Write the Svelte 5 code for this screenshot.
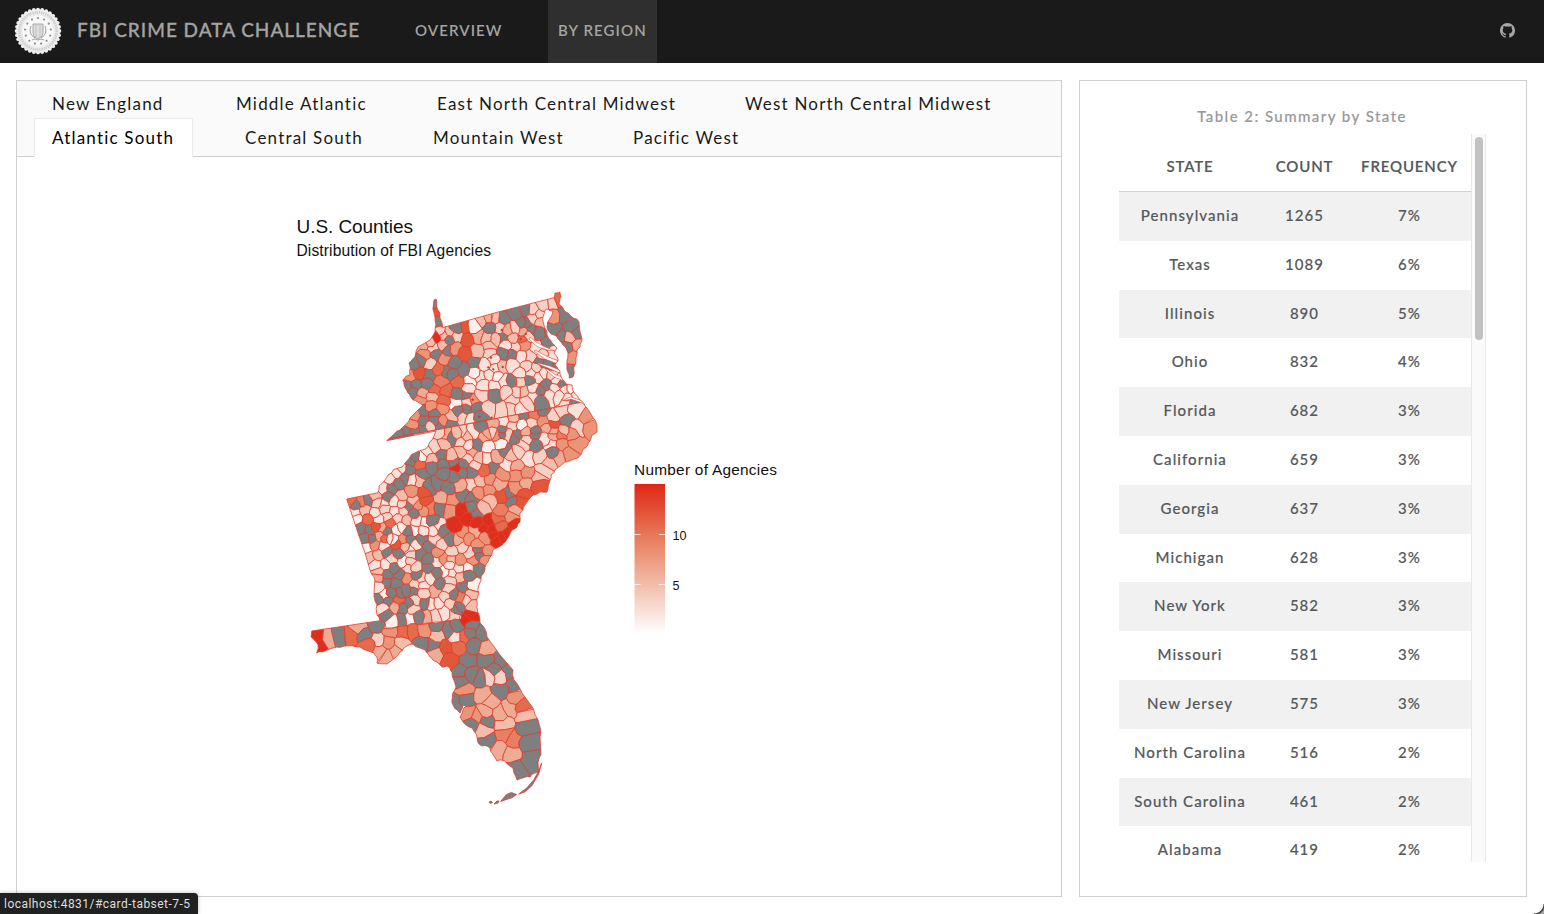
<script>
  const shades = ['#fdf0ec', '#fae2da', '#f6d2c6', '#f2bdab', '#eeac95', '#ea9578', '#e77f60', '#e46b4b', '#e2573a', '#df2f1c'];

  // County centres, one sheet per area: "x y shade", three sheet units to a pixel.
  const sheets = [
    {
      x: 380, y: 285, data: `167 62 g,172 80 8,175 115 g,180 140 2,210 140 3,230 130 g,255 125 8,282 125 0,305 105 3,325 98 4,168 157 9,190 152 3,208 165 g,230 155 2,262 165 8,295 155 4,150 170 3,190 180 3,160 190 2,128 185 4,205 195 g,225 190 5,255 205 8,290 200 3,135 210 5,103 235 g,125 225 g,150 235 2,168 207 g,195 222 5,222 235 g,285 235 g,250 255 g,175 250 7,200 260 g,117 265 8,145 270 g,90 275 5,82 300 g,108 300 g,138 298 g,185 290 6,235 293 7,215 265 g,100 320 g,127 325 4,165 320 7,200 318 7,230 325 g,260 330 g,120 345 5,158 337 3,155 365 5,190 348 7,130 378 g,165 385 g,105 395 5,185 370 5,60 450 g,85 443 g,100 420 5,103 437 g,130 432 g,130 408 g,165 407 g,150 425 2,190 410 5,215 395 3,180 425 g,210 418 g,235 380 g,225 355 0,260 375 g,265 350 2,250 395 2,290 368 g,280 345 5,270 400 1,300 395 g,305 425 g,
270 290 0,265 310 1,283 265 0,300 275 1,315 240 1,330 205 2,345 165 3,322 160 3,370 160 g,330 125 g,360 125 2,370 105 g,345 100 3,330 182 3,385 135 4,410 85 g,435 75 g,460 75 2,490 60 2,515 55 2,532 45 7,400 160 3,425 115 g,440 115 g,405 130 2,430 140 4,425 163 7,445 150 2,455 135 g,470 140 g,460 100 2,480 110 3,480 90 2,430 180 5,405 185 2,378 180 1,395 210 g,370 205 g,340 225 1,365 245 3,345 250 1,330 270 1,310 300 1,305 330 2,345 300 1,370 290 1,350 275 0,345 330 g,380 320 2,400 345 2,400 290 g,420 290 2,450 285 g,420 265 1,400 240 1,425 215 1,450 215 2,440 245 2,470 250 2,455 265 1,480 235 g,505 235 g,520 247 g,470 190 1,500 185 g,515 205 1,490 205 2,490 265 1,515 270 2,475 275 1,530 285 1,545 295 g,500 300 g,480 318 g,460 310 1,430 320 3,410 320 2,440 350 2,480 345 g,460 335 1,510 330 1,525 310 1,540 330 1,555 315 1,325 370 2,365 375 2,395 370 2,420 370 1,575 310 0,590 330 1,560 340 1,580 355 g,560 350 1,
520 95 5,550 90 g,520 130 g,540 155 g,575 125 g,590 145 g,570 160 3,565 185 g,590 180 4,575 215 5,572 260 g,340 415 4,370 408 1,400 400 3,430 392 g,460 390 6,490 375 g,520 395 2,545 380 2,620 395 5,590 375 1,520 418 8,560 408 g,590 430 2,635 425 5,550 440 3,520 440 4,490 410 5,500 430 4,455 415 2,425 420 0,400 420 2,365 440 g,340 445 2,315 455 4,280 442 1,245 445 2,195 450 4,410 450 g,440 440 4,465 440 g`
    },
    {
      x: 335, y: 430, data: `315 10 2,350 25 g,325 40 3,380 35 2,370 12 3,400 45 1,395 20 3,425 45 g,455 15 4,460 50 0,495 40 0,500 12 g,485 15 5,520 15 2,540 20 g,575 30 2,600 12 g,600 45 g,565 45 2,630 25 1,655 15 4,680 12 6,710 12 5,720 40 5,700 70 5,650 45 1,680 45 5,300 50 2,275 65 1,260 80 0,320 78 g,350 80 3,380 65 3,410 70 4,430 85 3,455 85 1,485 80 4,510 60 g,530 75 3,580 85 1,615 80 2,655 65 g,675 80 4,550 65 2,
240 80 g,225 95 g,255 103 7,220 120 g,290 90 3,290 110 g,325 105 g,262 130 g,365 112 9,355 95 g,385 105 g,400 85 2,410 125 g,420 105 2,450 120 7,475 115 g,515 105 1,545 110 4,575 130 5,545 135 5,500 130 5,625 120 2,640 100 3,610 145 3,355 140 g,380 125 g,325 130 g,200 115 1,185 130 1,165 145 1,210 145 g,190 160 g,230 150 1,145 175 1,170 175 g,250 150 3,285 170 g,310 160 g,340 175 g,375 168 4,410 165 2,435 155 3,465 150 5,490 160 4,430 185 5,460 180 5,385 195 g,410 205 g,500 200 8,522 190 g,545 175 5,575 160 4,610 165 8,565 195 8,555 215 8,530 215 g,
320 205 4,350 210 5,315 235 g,345 240 5,265 190 8,270 215 8,285 235 6,230 185 5,380 240 9,360 285 9,400 265 9,410 232 g,426 250 g,445 235 3,465 215 3,500 240 6,490 268 7,425 277 9,445 290 9,460 275 9,470 300 9,497 290 7,530 260 5,540 240 4,540 290 9,515 310 9,485 330 9,500 320 9,475 315 9,420 305 4,450 325 5,385 310 5,400 325 5,430 345 5,370 330 4,
50 215 7,62 225 g,80 215 6,100 213 g,125 218 2,120 200 3,160 200 g,145 225 1,180 215 1,200 200 3,200 220 2,220 230 g,235 212 3,65 265 0,60 245 1,100 268 7,90 240 3,120 250 1,150 240 2,130 268 1,155 260 2,180 245 1,205 245 2,235 250 g,265 240 5,250 225 5,78 295 g,105 300 g,125 290 8,140 295 4,165 280 7,190 265 2,185 300 0,155 305 g,215 270 3,200 293 0,245 275 1,270 280 0,240 300 0,265 300 1,290 275 g,220 305 g,295 300 1,310 290 1,325 305 g,345 330 g,90 325 g,110 325 g,135 320 4,165 325 1,150 325 7,120 345 5,145 350 1,95 355 0,187 342 8,175 327 0,205 330 5,225 330 g,240 345 1,262 328 g,210 350 3,225 360 1,285 350 g,300 330 2,320 345 2,310 368 5,325 385 5,350 365 2,350 390 3,380 350 2,375 390 5,405 370 2,430 360 g,415 390 5,433 377 g,455 365 5,450 390 5,430 415 g,
105 380 3,130 375 3,155 367 g,170 385 2,190 370 g,205 395 0,230 375 2,225 395 2,255 375 g,280 390 g,280 412 g,305 395 1,305 430 g,125 405 1,150 405 1,175 415 g,220 415 2,240 412 2,245 435 g,195 435 g,215 445 5,130 425 3,130 445 4,155 435 g,155 455 g,185 460 g,260 445 2,285 445 1,315 460 g,330 425 0,350 430 1,345 405 1,370 415 1,400 415 0,400 435 g,375 440 3,415 465 0,385 470 g,345 450 2,340 475 2,300 485 4,265 465 1,240 465 2,130 470 1,150 495 0,170 490 g,195 490 g,235 485 g,215 480 g,265 490 2,355 495 g,375 503 6,410 495 3,395 512 2,330 502 2,345 520 2,370 530 g,310 520 1,270 518 g,240 512 2,225 522 g,190 510 7,160 515 g,130 510 g,180 530 4,200 535 g,410 525 3,145 535 1,290 522 1`
    },
    {
      x: 300, y: 590, data: `260 72 g,280 95 0,305 92 g,330 87 0,355 80 g,380 80 4,405 75 2,430 65 1,460 78 2,470 55 g,512 77 9,500 92 9,340 55 2,50 145 9,60 165 9,85 145 4,118 138 g,153 135 7,180 112 4,195 135 g,230 105 g,205 165 7,235 150 2,240 185 4,265 155 5,270 125 5,260 200 4,290 185 4,305 160 3,310 128 7,340 125 7,372 120 5,365 160 g,400 165 g,412 135 3,410 108 g,445 120 g,410 190 4,438 175 8,450 210 8,475 170 7,470 140 1,490 140 7,472 110 g,515 108 g,510 130 g,545 130 g,520 165 g,562 175 4,505 210 g,560 208 g,600 210 g,480 248 g,515 255 g,540 265 g,485 275 g,565 260 2,600 262 2,580 240 g,625 250 g,640 285 g,600 300 g,495 298 5,500 328 g,470 340 g,550 315 4,570 335 4,650 323 5,668 350 7,630 355 4,675 375 3,505 370 5,530 380 5,555 365 4,560 392 g,600 370 4,610 400 3,515 400 g,550 418 3,615 435 6,640 450 6,560 450 g,600 480 4,635 490 4,680 415 g,685 460 g,690 510 g,645 535 g`
    }
  ];

  // Signed distance below the Virginia–Carolina line and the Georgia–Florida line.
  const lineVA = (x, y) => y - (430 - (x - 436) * 0.19);
  const lineFL = (x, y) => y - (628 - (x - 387) * 0.112);

  const seeds = sheets.flatMap((s) =>
    s.data.split(',').map((t) => {
      const [a, b, c] = t.trim().split(' ');
      const x = s.x + a / 3;
      const y = s.y + b / 3;
      return { x, y, va: lineVA(x, y) > 0, fl: lineFL(x, y) > 0, fill: c === 'g' ? '#7f7f7f' : shades[+c] };
    })
  );

  const noise = (x, y, k) => {
    const v = Math.sin(Math.round(x * 20) * 12.9898 + Math.round(y * 20) * 78.233 + k * 37.7) * 43758.5453;
    return v - Math.floor(v) - 0.5;
  };

  function roughen(pts, amount, min, max) {
    const out = [];
    pts.forEach((p, i) => {
      const q = pts[(i + 1) % pts.length];
      out.push(p);
      const len = Math.hypot(q[0] - p[0], q[1] - p[1]);
      const mx = (p[0] + q[0]) / 2;
      const my = (p[1] + q[1]) / 2;
      if (len > min && len < max && Math.abs(lineVA(mx, my)) > 0.1) {
        const a = Math.min(len, 12) * amount;
        out.push([mx + noise(mx, my, 1) * a, my + noise(mx, my, 2) * a]);
      }
    });
    return out;
  }

  function clip(poly, side) {
    const next = [];
    poly.forEach((p, i) => {
      const q = poly[(i + 1) % poly.length];
      const a = side(p), b = side(q);
      if (a <= 0) next.push(p);
      if ((a < 0) !== (b < 0)) {
        const t = a / (a - b);
        next.push([p[0] + (q[0] - p[0]) * t, p[1] + (q[1] - p[1]) * t]);
      }
    });
    return next;
  }

  function cell(s) {
    const r = 32;
    let poly = [[s.x - r, s.y - r], [s.x + r, s.y - r], [s.x + r, s.y + r], [s.x - r, s.y + r]];
    for (const o of seeds) {
      if (o === s || Math.abs(o.x - s.x) > 66 || Math.abs(o.y - s.y) > 66 || o.va !== s.va) continue;
      if (o.fl !== s.fl && o.x < 458 && s.x < 458 && o.x > 378 && s.x > 378) continue;
      const dx = o.x - s.x, dy = o.y - s.y;
      if (dx === 0 && dy === 0) continue;
      const mx = (o.x + s.x) / 2, my = (o.y + s.y) / 2;
      poly = clip(poly, (p) => (p[0] - mx) * dx + (p[1] - my) * dy);
    }
    const va = s.va ? -1 : 1;
    poly = clip(poly, (p) => va * lineVA(p[0], p[1]));
    if (s.x > 378 && s.x < 458) {
      const fl = s.fl ? -1 : 1;
      if (!s.fl || s.x > 387) poly = clip(poly, (p) => fl * lineFL(p[0], p[1]));
    }
    return poly;
  }

  const toPath = (pts) => 'M' + pts.map((p) => p[0].toFixed(1) + ' ' + p[1].toFixed(1)).join('L') + 'Z';
  const counties = seeds.map((s) => ({ fill: s.fill, d: toPath(roughen(cell(s), 0.4, 3, 60)) }));

  const coast = `434 300,436 299,438 310,440 318,442.3 327.7,498 312,554 297.7,555 293,560 292,561 297,559 303,563 308,568 313,573 318,579 322,581 335,580 347,577 350,575 365,573 377,569 378,567 370,568 353,563 345,560 341,551 334,547 327,550 318,553 311,546 309,543 317,544 325,547 335,552 343,557 348,554 353,558 361,555 365,560 371,563 380,566 384,572 385,580 400,587 408,595 420,597 432,592 435,590 441,583 449,578 458,565 462,555 470,550 480,547 492,541 491.7,533 495,525 505,520 513,520 522,517 527,512 530,508 538,502 545,494 549,490 557,485 567,481 577,478 588,476.7 600,477.7 612,480 623,487 637,500 655,513 670,514 680,522 693,533 708,538 720,540 737,541 755,538 762,539 772,530 777,517 780,513 768,505 761,497 761,490 748,482 746,477 737,472 728,460 717,466 706,463 705,460 713,454 707,452.7 697,456 687,452 672,447 666,442 667,437 662,430 657,425 650,413 644,407 646,400 652,395 658,387 664,377 663,374 653,360 647,345 646,333 648,325 651,316.7 653,318 645,311 637,311.7 631,380 620.7,377 615,377 605,374 597,375 580,370 570,365 553,358 533,346.7 499,378 492.7,379 486,385 480,388 475,402 467,410 457,415 453,422 450,432 440,436 431,386.7 440.7,400 430,410 418,423 405,413 400,408 393,402.7 380,410 375,409 363,415 357,418 347,430 340,435 332,435 317`
    .split(',').map((t) => t.trim().split(' ').map(Number));
  const outline = toPath(roughen(roughen(coast, 0.28, 6, 17.5), 0.25, 4, 9));

  const towns = [[365, 135], [325, 247], [340, 253], [368, 246], [333, 218], [278, 344], [335, 398], [298, 395], [422, 162], [437, 147]]
    .map(([x, y]) => [380 + x / 3, 285 + y / 3]);

  const stars = Array.from({ length: 13 }, (_, i) => {
    const a = (i / 13) * Math.PI * 2;
    return [24 + Math.sin(a) * 13, 24 - Math.cos(a) * 13];
  });
  const scallops = Array.from({ length: 32 }, (_, i) => {
    const a = (i / 32) * Math.PI * 2;
    return [24 + Math.sin(a) * 21.4, 24 - Math.cos(a) * 21.4];
  });

  const tabRows = [
    [['New England', 114], ['Middle Atlantic', 131], ['East North Central Midwest', 238], ['West North Central Midwest', 246]],
    [['Atlantic South', 123], ['Central South', 118], ['Mountain West', 130], ['Pacific West', 106]]
  ];
  const rows = [
    ['Pennsylvania', 1265, 7], ['Texas', 1089, 6], ['Illinois', 890, 5], ['Ohio', 832, 4], ['Florida', 682, 3],
    ['California', 659, 3], ['Georgia', 637, 3], ['Michigan', 628, 3], ['New York', 582, 3], ['Missouri', 581, 3],
    ['New Jersey', 575, 3], ['North Carolina', 516, 2], ['South Carolina', 461, 2], ['Alabama', 419, 2]
  ];
</script>

<div class="page">
  <header>
    <svg class="seal" width="48" height="48" viewBox="0 0 48 48">
      {#each scallops as [x, y]}<circle cx={x} cy={y} r="1.9" fill="#f0f0f0" />{/each}
      <circle cx="24" cy="24" r="21.8" fill="#eeeeee" />
      <circle cx="24" cy="24" r="18.6" fill="none" stroke="#cbcbcb" stroke-width="2.6" stroke-dasharray="1.3 .9" />
      <circle cx="24" cy="24" r="16.2" fill="#f8f8f8" stroke="#dedede" stroke-width=".5" />
      {#each stars as [x, y]}<circle cx={x} cy={y} r="1.05" fill="#858585" />{/each}
      <path d="M19 17h10v9q0 4-5 6q-5-2-5-6z" fill="#dedede" stroke="#999" stroke-width=".8" />
      <path d="M22 17v13M26 17v13" stroke="#c0c0c0" stroke-width=".9" />
      <path d="M17 19q-3 8 4 12M31 19q3 8-4 12M18 33l3-1 3 1 3-1 3 1" fill="none" stroke="#999" stroke-width=".9" />
    </svg>
    <div class="brand">FBI CRIME DATA CHALLENGE</div>
    <nav>
      <span class="link overview">OVERVIEW</span>
      <span class="link current">BY REGION</span>
    </nav>
    <svg class="github" width="15" height="15" viewBox="0 0 16 16">
      <path fill="#a6a6a6" d="M8 0C3.58 0 0 3.58 0 8c0 3.54 2.29 6.53 5.47 7.59.4.07.55-.17.55-.38 0-.19-.01-.82-.01-1.49-2.01.37-2.53-.49-2.69-.94-.09-.23-.48-.94-.82-1.13-.28-.15-.68-.52-.01-.53.63-.01 1.08.58 1.23.82.72 1.21 1.87.87 2.33.66.07-.52.28-.87.51-1.07-1.78-.2-3.64-.89-3.64-3.95 0-.87.31-1.59.82-2.15-.08-.2-.36-1.02.08-2.12 0 0 .67-.21 2.2.82.64-.18 1.32-.27 2-.27s1.36.09 2 .27c1.53-1.04 2.2-.82 2.2-.82.44 1.1.16 1.92.08 2.12.51.56.82 1.27.82 2.15 0 3.07-1.87 3.75-3.65 3.95.29.25.54.73.54 1.48 0 1.07-.01 1.93-.01 2.2 0 .21.15.46.55.38A8.01 8.01 0 0 0 16 8c0-4.42-3.58-8-8-8" />
    </svg>
  </header>

  <main>
    <section class="card map-card">
      <div class="tabs">
        {#each tabRows as row}
          <div class="tab-row">
            {#each row as [name, width]}
              <div class="tab" class:active={name === 'Atlantic South'}><span style="width:{width}px">{name}</span></div>
            {/each}
          </div>
        {/each}
      </div>
      <svg class="plot" width="1044" height="739" viewBox="17 157 1044 739">
        <defs>
          <clipPath id="land"><path d={outline} /></clipPath>
          <linearGradient id="ramp" x1="0" y1="0" x2="0" y2="1">
            <stop offset="0" stop-color="#df2817" />
            <stop offset=".17" stop-color="#e34f35" />
            <stop offset=".34" stop-color="#e77858" />
            <stop offset=".5" stop-color="#ec9a7f" />
            <stop offset=".67" stop-color="#f2bda9" />
            <stop offset=".84" stop-color="#f8ded5" />
            <stop offset="1" stop-color="#fff" />
          </linearGradient>
        </defs>
        <text x="296.5" y="233" font-size="19" textLength="116.5">U.S. Counties</text>
        <text x="296.5" y="256" font-size="15.6" textLength="194.5">Distribution of FBI Agencies</text>
        <g clip-path="url(#land)" stroke="#e23a2c" stroke-width=".8" stroke-linejoin="round">
          {#each counties as c}<path d={c.d} fill={c.fill} />{/each}
          <path d="M547 350l-9-3-5-4-4-4 1-2 6 5 7 4 12 5zM558 364l-13-5-11-8 1-1 11 6 15 6zM562 374l-14-6-10-4 0-1 12 3 14 6zM564 381l-10-4-8-7 1-1 9 6 12 4zM590 408l-8-5-11-4-6 1 0-1 6-2 12 4 8 5z" fill="#fff" stroke-width=".5" />
        </g>
        <path d={outline} fill="none" stroke="#df4033" stroke-width=".8" />
        {#each towns as [x, y]}<circle cx={x} cy={y} r=".9" fill="#9c4a43" stroke="#d0382d" stroke-width=".6" />{/each}
        <g fill="#7f7f7f" stroke="#d93a2e" stroke-width=".8" stroke-linejoin="round">
          <path d="M541.7 763l-3 11-7 12-7 6-6 2 8-6 7-8 5-9z" />
          <path d="M500.5 801.500l6-7 5-2 5 2-4 3-6 2z" />
          <path d="M489 802l2-1 1.500 1.500-2 1zM494 804l3-3 2 0-1 2z" />
        </g>
        <text x="634" y="474.500" font-size="15.4" textLength="143">Number of Agencies</text>
        <rect x="634.500" y="484" width="30.500" height="150" fill="url(#ramp)" />
        <path d="M634.500 534.500h6M659 534.500h6M634.500 584.500h6M659 584.500h6" stroke="#fff" stroke-opacity=".8" />
        <text x="672.500" y="540" font-size="12.6">10</text>
        <text x="672.500" y="590" font-size="12.6">5</text>
      </svg>
    </section>

    <section class="card table-card">
      <div class="caption">Table 2: Summary by State</div>
      <div class="scroller">
        <div class="grid">
          <div class="row head"><span>STATE</span><span>COUNT</span><span>FREQUENCY</span></div>
          {#each rows as [state, count, freq]}
            <div class="row"><span>{state}</span><span>{count}</span><span>{freq}%</span></div>
          {/each}
        </div>
        <div class="track"><div class="thumb"></div></div>
      </div>
    </section>
  </main>
  <div class="status">localhost:4831/#card-tabset-7-5</div>
  <div class="corner"></div>
</div>

<style>
  :global(body) { background: #fff; }
  .page { position: relative; box-sizing: border-box; width: 1544px; height: 914px; overflow: hidden; font-family: Lato, 'Open Sans', sans-serif; display: flex; flex-direction: column; }
  header { height: 63px; flex: none; background: #1a1a1a; display: flex; align-items: center; color: #a3a3a3; white-space: nowrap; }
  .seal { margin: 0 15px 2px 14px; flex: none; }
  .brand { width: 328px; font-size: 19px; letter-spacing: .98px; font-weight: 500; -webkit-text-stroke: .3px; line-height: 24px; padding-bottom: 3px; }
  nav { display: flex; height: 63px; flex: 1; }
  .link { box-sizing: border-box; padding: 0 10px; font-size: 15px; line-height: 61px; letter-spacing: 1.1px; font-weight: 600; }
  .overview { width: 143px; }
  .current { width: 109px; background: #2f2f2f; }
  .github { margin: 0 29px 2px 0; }
  main { display: flex; gap: 17px; padding: 17px 17px 0 16px; }
  .card { box-sizing: border-box; border: 1px solid #cfcfcf; height: 817px; background: #fff; }
  .map-card { width: 1046px; }
  .tabs { box-sizing: border-box; height: 76px; background: #fafafa; border-bottom: 1px solid #cfcfcf; padding: 3px 0 0 17px; }
  .tab-row { display: flex; height: 34px; }
  .tab { box-sizing: border-box; height: 34px; padding: 0 35px; line-height: 39px; font-size: 17px; letter-spacing: 1.2px; color: #1a1a1a; white-space: nowrap; }
  .tab span { display: block; }
  .tab:first-child { padding-left: 18px; }
  .tab.active { width: 159px; height: 39px; margin-right: 17px; padding: 0 17px; line-height: 37px; background: #fff; border: 1px solid #ececec; border-bottom: 0; color: #000; }
  .plot { display: block; }
  .plot text { font-family: 'Liberation Sans', sans-serif; fill: #111; }
  .table-card { width: 448px; padding: 24px 39px 0; color: #55595c; font-size: 15px; font-weight: 500; letter-spacing: 1.05px; -webkit-text-stroke: .15px; }
  .caption { height: 29px; line-height: 23px; width: 366px; text-align: center; color: #999; letter-spacing: 1.45px; }
  .scroller { display: flex; width: 367px; height: 728px; overflow: hidden; }
  .grid { width: 352px; }
  .row { display: grid; grid-template-columns: 142px 87px 123px; height: 48.8px; line-height: 46px; text-align: center; white-space: nowrap; }
  .row:nth-child(even) { background: #f1f1f1; }
  .row.head { box-sizing: border-box; height: 58px; border-bottom: 1px solid #d3d3d3; padding-top: 9px; font-weight: 600; letter-spacing: .85px; }
  .track { box-sizing: border-box; width: 15px; border: solid #e8e8e8; border-width: 0 1px; background: #fafafa; padding: 3px 0 0 3px; }
  .thumb { width: 8px; height: 203px; border-radius: 4px; background: #c1c1c1; }
  .status { position: absolute; left: 0; bottom: 0; box-sizing: border-box; width: 198px; height: 21px; padding-left: 4px; font: 12px/22px Roboto, sans-serif; letter-spacing: .47px; color: #dedede; background: #202222; border-radius: 0 4px 0 0; box-shadow: 0 0 4px #0004; white-space: nowrap; }
  .corner { position: absolute; right: 0; bottom: 0; width: 10px; height: 10px; background: radial-gradient(circle at 0 0, transparent 9px, #333 10px, #aaa 12px); }
</style>
